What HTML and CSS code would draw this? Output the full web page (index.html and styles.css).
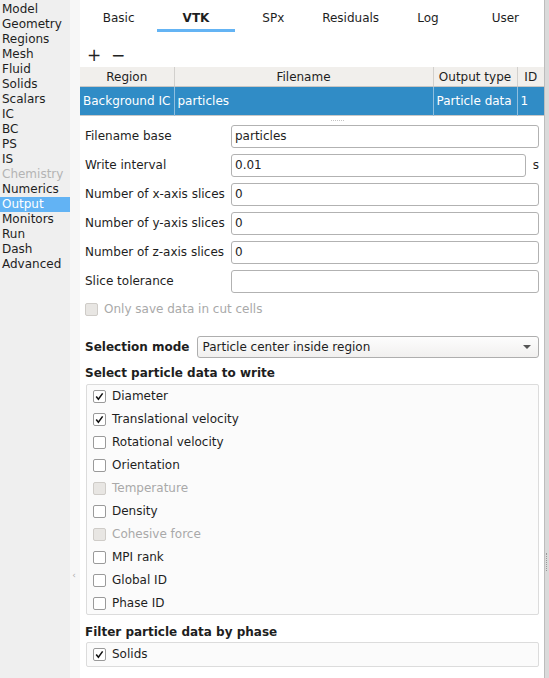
FILE: index.html
```html
<!DOCTYPE html>
<html>
<head>
<meta charset="utf-8">
<link rel="stylesheet" href="styles.css">
</head>
<body>
<div class="app">
  <nav class="sidebar">
    <div class="nav-item">Model</div>
    <div class="nav-item">Geometry</div>
    <div class="nav-item">Regions</div>
    <div class="nav-item">Mesh</div>
    <div class="nav-item">Fluid</div>
    <div class="nav-item">Solids</div>
    <div class="nav-item">Scalars</div>
    <div class="nav-item">IC</div>
    <div class="nav-item">BC</div>
    <div class="nav-item">PS</div>
    <div class="nav-item">IS</div>
    <div class="nav-item disabled">Chemistry</div>
    <div class="nav-item">Numerics</div>
    <div class="nav-item active">Output</div>
    <div class="nav-item">Monitors</div>
    <div class="nav-item">Run</div>
    <div class="nav-item">Dash</div>
    <div class="nav-item">Advanced</div>
  </nav>
  <div class="splitter"><span class="split-arrow">‹</span></div>
  <main class="main">
    <div class="tabs">
      <div class="tab">Basic</div>
      <div class="tab active">VTK</div>
      <div class="tab">SPx</div>
      <div class="tab">Residuals</div>
      <div class="tab">Log</div>
      <div class="tab">User</div>
    </div>
    <div class="toolbar">
      <span class="tool">+</span>
      <span class="tool">−</span>
    </div>
    <table class="grid">
      <thead>
        <tr>
          <th class="c-region">Region</th>
          <th class="c-file">Filename</th>
          <th class="c-type">Output type</th>
          <th class="c-id">ID</th>
        </tr>
      </thead>
      <tbody>
        <tr class="selected">
          <td>Background IC</td>
          <td>particles</td>
          <td>Particle data</td>
          <td>1</td>
        </tr>
      </tbody>
    </table>
    <div class="handle"><span class="dots"></span></div>
    <div class="form">
      <div class="row"><label class="lbl">Filename base</label><div class="input">particles</div></div>
      <div class="row"><label class="lbl">Write interval</label><div class="input">0.01</div><span class="unit">s</span></div>
      <div class="row"><label class="lbl">Number of x-axis slices</label><div class="input">0</div></div>
      <div class="row"><label class="lbl">Number of y-axis slices</label><div class="input">0</div></div>
      <div class="row"><label class="lbl">Number of z-axis slices</label><div class="input">0</div></div>
      <div class="row"><label class="lbl">Slice tolerance</label><div class="input"></div></div>
    </div>
    <div class="cut-cells check disabled"><span class="box"></span><span>Only save data in cut cells</span></div>
    <div class="select-row">
      <span class="bold">Selection mode</span>
      <div class="combo"><span>Particle center inside region</span><span class="arrow"></span></div>
    </div>
    <div class="section-title">Select particle data to write</div>
    <div class="group">
      <div class="check"><span class="box on"><svg viewBox="0 0 13 13"><path d="M2.6 6.4 L5.2 9.8 L10.2 2.8"/></svg></span><span>Diameter</span></div>
      <div class="check"><span class="box on"><svg viewBox="0 0 13 13"><path d="M2.6 6.4 L5.2 9.8 L10.2 2.8"/></svg></span><span>Translational velocity</span></div>
      <div class="check"><span class="box"></span><span>Rotational velocity</span></div>
      <div class="check"><span class="box"></span><span>Orientation</span></div>
      <div class="check disabled"><span class="box"></span><span>Temperature</span></div>
      <div class="check"><span class="box"></span><span>Density</span></div>
      <div class="check disabled"><span class="box"></span><span>Cohesive force</span></div>
      <div class="check"><span class="box"></span><span>MPI rank</span></div>
      <div class="check"><span class="box"></span><span>Global ID</span></div>
      <div class="check"><span class="box"></span><span>Phase ID</span></div>
    </div>
    <div class="section-title second">Filter particle data by phase</div>
    <div class="group small">
      <div class="check"><span class="box on"><svg viewBox="0 0 13 13"><path d="M2.6 6.4 L5.2 9.8 L10.2 2.8"/></svg></span><span>Solids</span></div>
    </div>
  </main>
  <div class="scrollstrip"><span class="grip"></span></div>
</div>
</body>
</html>
```
FILE: styles.css
```css
* { box-sizing: border-box; }
html, body {
  margin: 0;
  padding: 0;
  width: 549px;
  height: 678px;
  overflow: hidden;
  background: #ffffff;
  font-family: "DejaVu Sans", sans-serif;
  font-size: 12px;
  color: #1e1e1e;
}
.app {
  display: flex;
  width: 549px;
  height: 678px;
}
.sidebar {
  width: 70px;
  flex: none;
  background: #efefef;
  padding-top: 2px;
}
.nav-item {
  height: 15px;
  line-height: 15px;
  padding-left: 2px;
  white-space: nowrap;
}
.nav-item.disabled { color: #b4b4b4; }
.nav-item.active { background: #62b3f4; color: #ffffff; }

.splitter {
  width: 10px;
  flex: none;
  background: #f7f7f7;
  display: flex;
  align-items: center;
  justify-content: center;
  padding-top: 472px;
}
.split-arrow {
  color: #b0b0b0;
  font-size: 9px;
  line-height: 9px;
  margin-left: -2px;
}

.main {
  width: 464px;
  flex: none;
  display: flex;
  flex-direction: column;
}
.scrollstrip {
  width: 5px;
  flex: none;
  background: #dadada;
  border-left: 1px solid #bdbdbd;
  position: relative;
}
.grip {
  position: absolute;
  left: 1px;
  top: 553px;
  width: 2px;
  height: 18px;
  border-left: 1px dotted #9a9a9a;
}

.tabs {
  display: flex;
  height: 32px;
}
.tab {
  flex: 1;
  text-align: center;
  line-height: 36px;
  height: 32px;
  color: #1e1e1e;
}
.tab.active {
  font-weight: bold;
  border-bottom: 3px solid #64b4f4;
}

.toolbar {
  height: 35px;
  display: flex;
  align-items: center;
  gap: 13px;
  padding-left: 7px;
  padding-top: 11px;
}
.tool {
  font-size: 17px;
  line-height: 17px;
  color: #222;
  width: 11px;
  text-align: center;
}

.grid {
  width: 464px;
  border-collapse: collapse;
  table-layout: fixed;
  border-bottom: 1px solid #c8c8c8;
}
.grid th {
  height: 19px;
  font-weight: normal;
  background: #f1efec;
  border-right: 1px solid #d2d0cd;
  border-bottom: 1px solid #c9c7c4;
  padding: 2px 0 0 0;
  text-align: center;
  line-height: 16px;
}
.grid th:last-child { border-right: none; }
.c-region { width: 94px; }
.c-file { width: 259px; }
.c-type { width: 84px; }
.c-id { width: 27px; }
.grid td {
  height: 29px;
  padding: 0 0 0 3px;
  border-right: 1px solid #8fbfe0;
  white-space: nowrap;
  overflow: hidden;
}
.grid td:last-child { border-right: none; }
.grid tr.selected td { background: #308cc6; color: #ffffff; }

.handle {
  height: 9px;
  display: flex;
  justify-content: center;
  align-items: center;
}
.dots {
  width: 13px;
  border-top: 1px dotted #c4c4c4;
  margin-left: 50px;
}

.form {
  display: flex;
  flex-direction: column;
  gap: 6px;
  padding: 0 5px;
}
.row {
  display: flex;
  align-items: center;
  height: 23px;
}
.lbl {
  width: 146px;
  flex: none;
  white-space: nowrap;
}
.input {
  flex: 1;
  height: 23px;
  border: 1px solid #b2b2b2;
  border-radius: 3px;
  padding-left: 3px;
  line-height: 21px;
  background: #ffffff;
}
.unit {
  width: 13px;
  flex: none;
  text-align: right;
}

.check {
  display: flex;
  align-items: center;
  height: 23px;
  gap: 6px;
  white-space: nowrap;
}
.box {
  width: 13px;
  height: 13px;
  flex: none;
  border: 1px solid #9a9a9a;
  border-radius: 2px;
  background: #ffffff;
  display: flex;
}
.box svg {
  width: 11px;
  height: 11px;
}
.box svg path {
  fill: none;
  stroke: #111;
  stroke-width: 1.8;
}
.check.disabled { color: #a9a9a9; }
.check.disabled .box {
  background: #e8e6e3;
  border-color: #cfccc8;
}
.cut-cells {
  padding-left: 5px;
  margin-top: 5px;
}

.select-row {
  display: flex;
  align-items: center;
  padding: 0 5px;
  margin-top: 15px;
  height: 22px;
  gap: 8px;
}
.bold { font-weight: bold; }
.combo {
  flex: 1;
  height: 22px;
  border: 1px solid #aeaeae;
  border-radius: 3px;
  background: linear-gradient(#fdfdfd, #f1f0ef);
  display: flex;
  align-items: center;
  justify-content: space-between;
  padding: 0 7px 0 4px;
}
.arrow {
  width: 0;
  height: 0;
  border-left: 4px solid transparent;
  border-right: 4px solid transparent;
  border-top: 4px solid #555;
}

.section-title {
  font-weight: bold;
  padding-left: 5px;
  height: 16px;
  line-height: 16px;
  margin-top: 7px;
}
.section-title.second { margin-top: 9px; }
.group {
  margin: 3px 5px 0 6px;
  background: #fbfbfb;
  border: 1px solid #dcdcdc;
  border-radius: 2px;
  padding: 0 0 0 6px;
  height: 231px;
}
.group.small {
  height: 25px;
  margin-top: 2px;
}
.group.small .check { height: 23px; }
```
